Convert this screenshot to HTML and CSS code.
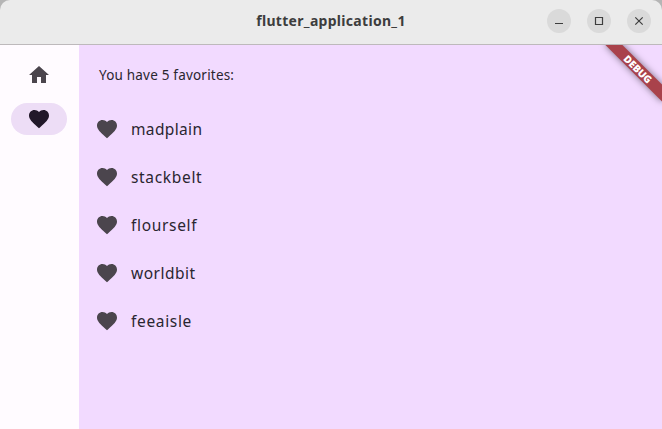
FILE: index.html
```
<!DOCTYPE html>
<html lang="en">
<head>
<meta charset="utf-8">
<title>flutter_application_1</title>
<link rel="stylesheet" href="styles.css">
</head>
<body>
<svg class="defs" width="0" height="0">
  <symbol id="heart" viewBox="0 0 24 24"><path d="M12 21.35l-1.45-1.32C5.4 15.36 2 12.28 2 8.5 2 5.42 4.42 3 7.5 3c1.74 0 3.41.81 4.5 2.09C13.09 3.81 14.76 3 16.5 3 19.58 3 22 5.42 22 8.5c0 3.78-3.4 6.86-8.55 11.54L12 21.35z"/></symbol>
  <symbol id="home" viewBox="0 0 24 24"><path d="M10 20v-6h4v6h5v-8h3L12 3 2 12h3v8z"/></symbol>
</svg>
<div class="window">
  <header class="titlebar">
    <span></span>
    <h1 class="title">flutter_application_1</h1>
    <div class="controls">
      <button class="control" aria-label="Minimize"><svg viewBox="0 0 24 24"><path d="M8 14.5h8"/></svg></button>
      <button class="control" aria-label="Maximize"><svg viewBox="0 0 24 24"><path d="M8.5 8.5h7v7h-7z"/></svg></button>
      <button class="control" aria-label="Close"><svg viewBox="0 0 24 24"><path d="M8.3 8.3l7.4 7.4M15.7 8.3l-7.4 7.4"/></svg></button>
    </div>
  </header>
  <div class="body">
    <nav class="rail">
      <a class="destination"><svg class="icon"><use href="#home"/></svg></a>
      <a class="destination selected"><svg class="icon"><use href="#heart"/></svg></a>
    </nav>
    <main class="page">
      <p class="summary">You have 5 favorites:</p>
      <ul class="favorites">
        <li><svg class="icon"><use href="#heart"/></svg><span class="word snug">madplain</span></li>
        <li><svg class="icon"><use href="#heart"/></svg><span class="word">stackbelt</span></li>
        <li><svg class="icon"><use href="#heart"/></svg><span class="word">flourself</span></li>
        <li><svg class="icon"><use href="#heart"/></svg><span class="word medium">worldbit</span></li>
        <li><svg class="icon"><use href="#heart"/></svg><span class="word">feeaisle</span></li>
      </ul>
      <div class="banner">DEBUG</div>
    </main>
  </div>
</div>
</body>
</html>
```
FILE: styles.css
```
* { box-sizing: border-box; }
body {
  margin: 0;
  background: #b5b5b5;
  font-family: "Noto Sans", "Open Sans", sans-serif;
  color: #2a2630;
}
.defs { display: block; }
.window {
  display: flex;
  flex-direction: column;
  height: 429px;
  overflow: hidden;
  border-radius: 10px 10px 0 0;
}
.titlebar {
  display: grid;
  grid-template-columns: 1fr auto 1fr;
  align-items: center;
  height: 45px;
  padding: 0 11px 2px;
  background: #ebebeb;
  border-bottom: 1px solid #bdb9bb;
}
.title {
  margin: 0;
  font-size: 14px;
  line-height: 20px;
  font-weight: 700;
  letter-spacing: 0.3px;
  color: #3d3d3d;
}
.controls {
  display: flex;
  justify-content: flex-end;
  gap: 16px;
}
.control {
  width: 24px;
  height: 24px;
  padding: 0;
  border: 0;
  border-radius: 50%;
  background: #dadada;
}
.control svg {
  display: block;
  width: 24px;
  height: 24px;
  fill: none;
  stroke: #3d3d3d;
  stroke-width: 1.2;
}
.body { display: flex; flex: 1; }
.rail {
  display: flex;
  flex-direction: column;
  align-items: center;
  gap: 12px;
  width: 79px;
  padding: 14px 1px 0 0;
  background: #fffbff;
}
.destination {
  display: flex;
  align-items: center;
  justify-content: center;
  width: 56px;
  height: 32px;
  border-radius: 16px;
}
.selected { background: #edddf6; }
.icon {
  display: block;
  flex: none;
  width: 24px;
  height: 24px;
  fill: #4b454d;
}
.selected .icon { fill: #211829; }
.page {
  position: relative;
  flex: 1;
  overflow: hidden;
  background: #f2daff;
}
.summary {
  margin: 0;
  padding: 20px 20px 20px;
  font-size: 13.5px;
  line-height: 20px;
  letter-spacing: 0.2px;
}
.favorites {
  margin: 0;
  padding: 0 16px;
  list-style: none;
}
.favorites li {
  display: flex;
  align-items: center;
  gap: 12px;
  height: 48px;
}
.word {
  font-size: 15.5px;
  line-height: 24px;
  letter-spacing: 0.67px;
  font-variant-ligatures: none;
}
.medium { letter-spacing: 0.5px; }
.snug { letter-spacing: 0.35px; }
.banner {
  position: absolute;
  top: 28px;
  right: -40px;
  width: 80px;
  height: 12px;
  transform: rotate(45deg);
  transform-origin: 50% -28px;
  background: #a9424b;
  box-shadow: 0 0 7px rgba(0, 0, 0, 0.5);
  color: #fff;
  font-size: 10.2px;
  font-weight: 900;
  line-height: 12px;
  letter-spacing: -0.1px;
  text-align: center;
}
```
